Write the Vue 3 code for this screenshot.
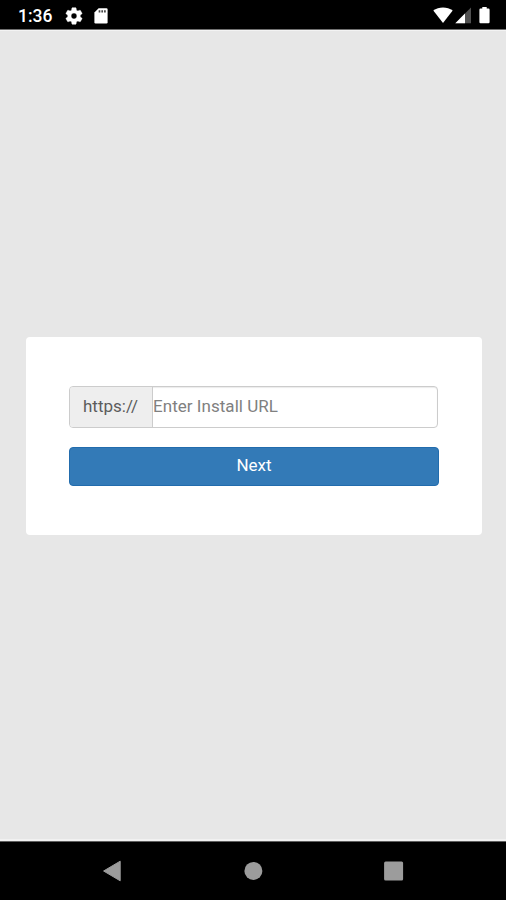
<script setup>
import { ref } from 'vue'

const installUrl = ref('')
</script>

<template>
  <div class="screen">
    <header class="status-bar">
      <span class="clock">1:36</span>
      <svg class="icon-gear" width="20" height="20" viewBox="0 0 24 24" fill="#fff" stroke="#fff" stroke-width="0.5">
        <path d="M19.43 12.98c.04-.32.07-.64.07-.98s-.03-.66-.07-.98l2.11-1.65c.19-.15.24-.42.12-.64l-2-3.46c-.12-.22-.39-.3-.61-.22l-2.49 1c-.52-.4-1.08-.73-1.69-.98l-.38-2.65C14.46 2.18 14.25 2 14 2h-4c-.25 0-.46.18-.49.42l-.38 2.65c-.61.25-1.17.59-1.69.98l-2.49-1c-.23-.09-.49 0-.61.22l-2 3.46c-.13.22-.07.49.12.64l2.11 1.65c-.04.32-.07.65-.07.98s.03.66.07.98l-2.11 1.65c-.19.15-.24.42-.12.64l2 3.46c.12.22.39.3.61.22l2.49-1c.52.4 1.08.73 1.69.98l.38 2.65c.03.24.24.42.49.42h4c.25 0 .46-.18.49-.42l.38-2.65c.61-.25 1.17-.59 1.69-.98l2.49 1c.23.09.49 0 .61-.22l2-3.46c.12-.22.07-.49-.12-.64l-2.11-1.65zM12 15.5c-1.93 0-3.5-1.57-3.5-3.5s1.57-3.5 3.5-3.5 3.5 1.57 3.5 3.5-1.57 3.5-3.5 3.5z"/>
      </svg>
      <svg class="icon-card" width="14" height="16" viewBox="0 0 14 16">
        <path d="M4.6 0.3H12.4Q13.6 0.3 13.6 1.5V14.3Q13.6 15.5 12.4 15.5H1.6Q0.4 15.5 0.4 14.3V4.5Z" fill="#fff"/>
        <path d="M5.5 2.2v2.2M8.2 2.2v2.2M10.9 2.2v2.2" stroke="#444" stroke-width="1.7"/>
      </svg>
      <div class="status-right">
        <svg width="20" height="17" viewBox="0 0 20 17">
          <path d="M0.3 3.6C5.8-.7 14.2-.7 19.7 3.6L10 16Z" fill="#fff"/>
        </svg>
        <svg class="icon-signal" width="17" height="17" viewBox="0 0 17 17">
          <path d="M0.3 16.3L16 0.6V16.3Z" fill="#505050"/>
          <path d="M0.3 16.3L10 6.6V16.3Z" fill="#fff"/>
        </svg>
        <svg class="icon-battery" width="11" height="17" viewBox="0 0 11 17">
          <path d="M3.3 0h4.4v1.6h1.8q1.1 0 1.1 1.1v12.4q0 1.2-1.1 1.2h-8q-1.1 0-1.1-1.2V2.7q0-1.1 1.1-1.1h1.8z" fill="#fff"/>
        </svg>
      </div>
    </header>

    <main class="content">
      <form class="card" @submit.prevent>
        <div class="input-group">
          <span class="input-addon">https://</span>
          <input v-model="installUrl" class="url-input" type="text" placeholder="Enter Install URL"/>
        </div>
        <button type="submit" class="btn-next">Next</button>
      </form>
    </main>

    <nav class="nav-bar">
      <svg width="20" height="22" viewBox="0 0 20 22">
        <path d="M1.6 11L18.2 1.2V20.8Z" fill="#9c9c9c" stroke="#9c9c9c" stroke-linejoin="round"/>
      </svg>
      <svg width="20" height="22" viewBox="0 0 20 22">
        <circle cx="10.4" cy="10.9" r="9" fill="#9c9c9c"/>
      </svg>
      <svg width="20" height="22" viewBox="0 0 20 22">
        <rect x="0.1" y="1.5" width="19" height="19" rx="1.5" fill="#9c9c9c"/>
      </svg>
    </nav>
  </div>
</template>

<style>
body {
  margin: 0;
  background: #000;
}
</style>

<style scoped>
.screen {
  display: flex;
  flex-direction: column;
  width: 506px;
  height: 900px;
  overflow: hidden;
  background: #e7e7e7;
  font-family: Roboto, "Liberation Sans", sans-serif;
}

.status-bar {
  display: flex;
  align-items: center;
  box-sizing: border-box;
  height: 30px;
  padding: 2px 16px 0 18px;
  background: #000;
  border-bottom: 1px solid #707070;
}

.clock {
  width: 46px;
  font-size: 17.5px;
  font-weight: 500;
  line-height: 20px;
  color: #fff;
}

.icon-card { margin-left: 10px; }

.status-right {
  display: flex;
  margin-left: auto;
}
.icon-signal { margin-left: 2px; }
.icon-battery { margin-left: 7px; }

.content {
  flex: 1;
  box-sizing: border-box;
  padding: 306px 24px 0 26px;
  border-top: 1px solid #f3f3f3;
  border-bottom: 2px solid #f1f1f1;
}

.card {
  box-sizing: border-box;
  height: 198px;
  padding: 49px 43px 0;
  background: #fff;
  border-radius: 4px;
}

.input-group {
  display: flex;
  box-sizing: border-box;
  height: 42px;
  margin-right: 1px;
  border: 1px solid #ccc;
  border-radius: 4px;
  box-shadow: inset 0 1px 1px rgba(0, 0, 0, 0.08);
}

.input-addon {
  box-sizing: border-box;
  width: 83px;
  padding-left: 13px;
  font-size: 17px;
  line-height: 38px;
  color: #5c5c5c;
  background: #eee;
  border-right: 1px solid #ccc;
  border-radius: 3px 0 0 3px;
}

.url-input {
  flex: 1;
  min-width: 0;
  padding: 0 0 2px;
  font-family: inherit;
  font-size: 17px;
  letter-spacing: 0.04px;
  color: #555;
  background: transparent;
  border: none;
  outline: none;
}
.url-input::placeholder { color: #808080; }

.btn-next {
  display: block;
  width: 100%;
  height: 39px;
  margin-top: 19px;
  padding: 0 0 3px;
  font-family: inherit;
  font-size: 17px;
  color: #fff;
  background: #337ab7;
  border: 1px solid #226cad;
  border-radius: 4px;
  cursor: pointer;
}

.nav-bar {
  display: flex;
  justify-content: space-between;
  box-sizing: border-box;
  height: 59px;
  padding: 18px 102px 0;
  background: #000;
  border-top: 1px solid #606060;
}
</style>
